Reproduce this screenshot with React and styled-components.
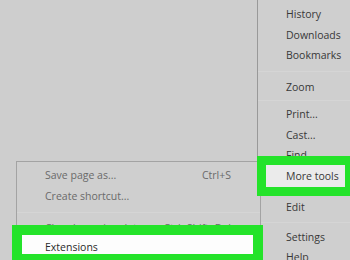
import React from "react";
import styled, { createGlobalStyle } from "styled-components";

const GREEN = "#24e32a";

const GlobalStyle = createGlobalStyle`
  html, body {
    margin: 0;
    padding: 0;
    background: #cecece;
    overflow: hidden;
  }
  body {
    font-family: "Open Sans", "Noto Sans", sans-serif;
  }
`;

const mainItems = [
  { label: "History" },
  { label: "Downloads" },
  { label: "Bookmarks" },
  { sep: 11 },
  { label: "Zoom" },
  { sep: 7 },
  { label: "Print..." },
  { label: "Cast..." },
  { label: "Find" },
  { label: "More tools", active: true },
  { sep: 11 },
  { label: "Edit" },
  { sep: 9 },
  { label: "Settings" },
  { label: "Help" },
];

const subItems = [
  { label: "Save page as...", shortcut: "Ctrl+S" },
  { label: "Create shortcut..." },
  { sep: 13 },
  { label: "Clear browsing data...", shortcut: "Ctrl+Shift+Del", h: 17.5 },
  { label: "Extensions", active: true },
];

function App() {
  return (
    <>
      <GlobalStyle />
      <Screen>
        <MainMenu>
          {mainItems.map((item, i) =>
            item.sep ? (
              <Separator key={i} h={item.sep} />
            ) : (
              <MainRow key={i} active={item.active}>
                <Label>{item.label}</Label>
              </MainRow>
            )
          )}
        </MainMenu>

        <SubMenu>
          {subItems.map((item, i) =>
            item.sep ? (
              <Separator key={i} h={item.sep} />
            ) : (
              <SubRow key={i} active={item.active} h={item.h}>
                <Label>{item.label}</Label>
                {item.shortcut && <Shortcut>{item.shortcut}</Shortcut>}
              </SubRow>
            )
          )}
        </SubMenu>
      </Screen>
    </>
  );
}

export default App;

const Screen = styled.div`
  position: relative;
  width: 350px;
  height: 260px;
  overflow: hidden;
  display: flex;
  justify-content: flex-end;
`;

const MainMenu = styled.div`
  width: 92px;
  height: 280px;
  padding-top: 4px;
  border-left: 1px solid #999;
  background: #cfcfcf;
  display: flex;
  flex-direction: column;
`;

const Separator = styled.div`
  height: ${(props) => props.h}px;
  flex-shrink: 0;
  display: flex;
  align-items: center;
  &::after {
    content: "";
    flex: 1;
    height: 1px;
    background: #d5d5d5;
  }
`;

const Label = styled.span`
  position: relative;
  z-index: 1;
`;

const MainRow = styled.div`
  position: relative;
  z-index: ${(props) => (props.active ? 2 : 0)};
  height: 20.5px;
  flex-shrink: 0;
  display: flex;
  align-items: center;
  padding-left: 28px;
  font-size: 10.5px;
  color: #383838;
  white-space: nowrap;

  ${(props) =>
    props.active &&
    `
    &::before {
      content: "";
      position: absolute;
      top: -10px;
      bottom: -10px;
      left: -1px;
      right: -4px;
      border: 9px solid ${GREEN};
      background: #ebebeb;
    }
  `}
`;

const SubMenu = styled.div`
  position: absolute;
  left: 16px;
  top: 161px;
  width: 243px;
  height: 120px;
  padding-top: 3px;
  border: 1px solid #a3a3a3;
  background: #cfcfcf;
  display: flex;
  flex-direction: column;
`;

const SubRow = styled.div`
  position: relative;
  z-index: ${(props) => (props.active ? 2 : 0)};
  height: ${(props) => props.h || 20.5}px;
  flex-shrink: 0;
  display: flex;
  align-items: center;
  justify-content: space-between;
  padding: 0 29px 0 28px;
  font-size: 10.5px;
  color: ${(props) => (props.active ? "#2a2a2a" : "#6a6a6a")};
  white-space: nowrap;

  ${(props) =>
    props.active &&
    `
    &::before {
      content: "";
      position: absolute;
      top: -12px;
      bottom: -7px;
      left: -5px;
      right: -3px;
      border: 10px solid ${GREEN};
      background: #fdfdfd;
    }
  `}
`;

const Shortcut = styled.span`
  position: relative;
  z-index: 1;
  color: #6a6a6a;
`;
